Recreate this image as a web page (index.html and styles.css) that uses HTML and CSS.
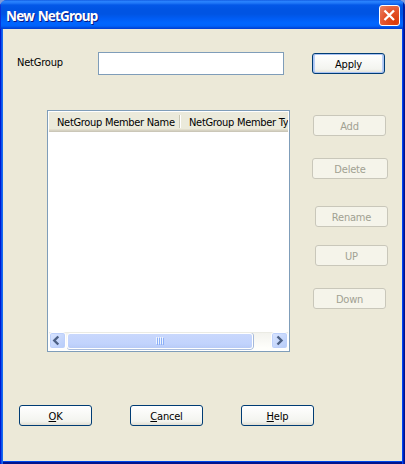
FILE: index.html
```html
<!DOCTYPE html>
<html lang="en">
<head>
<meta charset="utf-8">
<title>New NetGroup</title>
<link rel="stylesheet" href="styles.css">
</head>
<body>
<div class="window">
  <header class="titlebar">
    <h1>New NetGroup</h1>
    <button class="close" aria-label="Close"><svg width="21" height="21" viewBox="0 0 21 21"><path d="M5.5 5.5 15 15M15 5.5 5.5 15" stroke="#fff" stroke-width="2.3"/></svg></button>
  </header>
  <main class="content">
    <div class="name-row">
      <label for="netgroup">NetGroup</label>
      <input id="netgroup" type="text">
      <button class="btn primary">Apply</button>
    </div>
    <div class="members">
      <section class="list">
        <div class="list-head"><span class="col first">NetGroup Member Name</span><span class="col second">NetGroup Member Ty</span></div>
        <div class="list-body"></div>
        <div class="scroll">
          <span class="arrow"><svg width="15" height="15" viewBox="0 0 15 15"><path d="M8.3 3.5 4.3 7.5l4 4" fill="none" stroke="#4d6185" stroke-width="2.4"/></svg></span>
          <span class="thumb"><i></i><i></i><i></i><i></i></span>
          <span class="arrow end"><svg width="15" height="15" viewBox="0 0 15 15"><path d="M5.5 3.5l4 4-4 4" fill="none" stroke="#4d6185" stroke-width="2.4"/></svg></span>
        </div>
      </section>
      <div class="actions">
        <button class="btn add" disabled>Add</button>
        <button class="btn delete" disabled>Delete</button>
        <button class="btn rename" disabled>Rename</button>
        <button class="btn up" disabled>UP</button>
        <button class="btn down" disabled>Down</button>
      </div>
    </div>
    <footer class="footer">
      <button class="btn"><u>O</u>K</button>
      <button class="btn"><u>C</u>ancel</button>
      <button class="btn"><u>H</u>elp</button>
    </footer>
  </main>
</div>
</body>
</html>
```
FILE: styles.css
```css
* { box-sizing: border-box; }
body { margin: 0; background: #7f9ad8; font: 11px/13px "DejaVu Sans Condensed", "DejaVu Sans", sans-serif; font-stretch: condensed; letter-spacing: -0.2px; color: #000; overflow: hidden; }
.window {
  width: 405px; height: 464px; display: flex; flex-direction: column;
  border-radius: 7px 7px 0 0; overflow: hidden;
  background: linear-gradient(90deg, #0019cf 0 1px, #0a50ee 1px 2px, #166aee 2px 3px, #0855dd 3px 402px, #0046f0 402px 403px, #001fb8 403px 404px, #00138c 404px);
}
.titlebar {
  height: 29px; flex: none; display: flex; justify-content: space-between; padding: 5px 5px 0 6px;
  background: linear-gradient(#0a4fd8 0, #2b84ff 1px, #2078f8 3px, #0358e8 5px, #0054e3 9px, #0054e3 14px, #005df5 19px, #0066ff 23px, #0062fa 26px, #0047d8 28px, #003dd7 29px);
  box-shadow: inset 1px 0 #0831d9, inset -2px 0 #001ea0;
}
h1 { margin: 3px 0 0; font: bold 13.5px/16px "Noto Sans", sans-serif; letter-spacing: -0.8px; word-spacing: 1px; color: #fff; text-shadow: 1px 1px #0a1883; }
.close { width: 21px; height: 21px; padding: 0; border: 1px solid #fff; border-radius: 3px; background: radial-gradient(circle at 80% 85%, #d93a08, #e4552e 55%, #e98468); }
.close svg { display: block; margin: -1px; }
.content { flex: 1; margin: 0 3px 2px; background: #ece9d8; border-bottom: 1px solid #0046e8; box-shadow: 0 2px #00138c; }
.name-row { display: flex; padding: 23px 0 0 14px; }
.name-row label { width: 81px; padding-top: 4px; }
input { width: 186px; height: 23px; margin: 0; border: 1px solid #7f9db9; background: #fff; }
.btn {
  width: 73px; height: 21px; padding: 1px 0 0; display: block; border: 1px solid #003c74; border-radius: 3px;
  background: linear-gradient(#fff, #f3f4ef 80%, #e1ded3); font: inherit; letter-spacing: inherit; color: #000;
}
.btn u { text-underline-offset: 1px; }
.primary { margin: 1px 0 0 28px; box-shadow: inset 0 0 0 1px #a9c3f3, inset 0 -1px #7d9ce0, inset 2px 0 #b9cef5, inset -2px 0 #b9cef5; }
.btn:disabled { border-color: #c9c7ba; background: #f5f4ea; color: #a1a192; }
.members { display: flex; padding: 35px 0 0 44px; }
.list { width: 243px; height: 242px; padding: 1px; border: 1px solid #7f9db9; background: #fff; display: flex; flex-direction: column; }
.list-head { height: 20px; display: flex; overflow: hidden; white-space: nowrap; letter-spacing: -0.3px; background: linear-gradient(#ebeadb 17px, #e2decd 17px 18px, #d6d2c2 18px 19px, #cbc7b8 19px); }
.col { flex: none; padding: 4px 0 0 8px; }
.first { width: 132px; background: linear-gradient(90deg, #c7c5b2 1px, #fff 1px) 130px 3px / 2px 13px no-repeat; }
.list-body { flex: 1; }
.scroll { height: 18px; display: flex; background: linear-gradient(#ebebe4 1px, #f3f3ee 1px, #fefefb 16px); }
.arrow { width: 17px; height: 17px; border: 1px solid #fff; border-radius: 3px; background: linear-gradient(135deg, #dae5ff, #b5cbf9); box-shadow: inset 0 0 0 1px #bdd0fa; }
.arrow svg { display: block; }
.thumb { width: 186px; height: 16px; margin: 1px 0 0 1px; display: flex; justify-content: center; align-items: center; gap: 1px; border: 1px solid #fff; border-radius: 3px; background: linear-gradient(#c9d8fc, #c1d3fd 70%, #b8cbf6); box-shadow: 0 1px #aabdde, 1px 0 #a5b9da; }
.thumb i { width: 1px; height: 7px; background: #8cb0f8; box-shadow: -1px -1px #eef4fe; }
.end { margin-left: auto; }
.actions { padding: 5px 0 0 22px; }
.add, .down { margin-left: 1px; }
.delete { width: 76px; margin-top: 22px; }
.rename { margin: 27px 0 0 3px; }
.up { margin: 18px 0 0 3px; }
.down { margin-top: 22px; }
.footer { display: flex; gap: 38px; padding: 53px 0 0 16px; }
```
